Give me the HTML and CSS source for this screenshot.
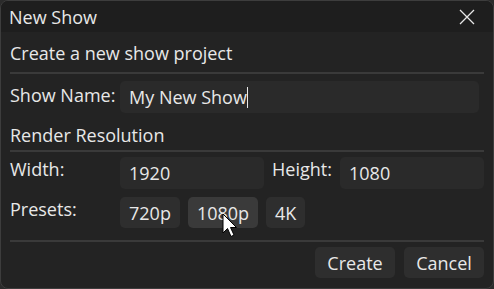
FILE: index.html
```html
<!DOCTYPE html>
<html lang="en">
<head>
    <meta charset="UTF-8">
    <title>New Show</title>
    <link rel="stylesheet" href="styles.css">
</head>
<body>
    <div class="dialog">
        <div class="titlebar">
            <span class="title">New Show</span>
            <svg class="close" width="16" height="16" viewBox="0 0 16 16">
                <path d="M1 1L15 15M15 1L1 15" stroke="#e6e6e6" stroke-width="1.3" fill="none"/>
            </svg>
        </div>
        <div class="content">
            <div class="heading">Create a new show project</div>
            <hr class="sep">
            <div class="row name-row">
                <label class="label">Show Name:</label>
                <div class="field wide">My New Show<span class="caret"></span></div>
            </div>
            <div class="heading sub">Render Resolution</div>
            <hr class="sep tight">
            <div class="row res-row">
                <label class="label">Width:</label>
                <div class="field w-field">1920</div>
                <label class="label inline">Height:</label>
                <div class="field h-field">1080</div>
            </div>
            <div class="row preset-row">
                <label class="label">Presets:</label>
                <div class="presets">
                    <button class="btn">720p</button>
                    <button class="btn hover">1080p</button>
                    <button class="btn">4K</button>
                </div>
            </div>
            <hr class="sep foot">
            <div class="actions">
                <button class="btn action">Create</button>
                <button class="btn action">Cancel</button>
            </div>
        </div>
        <svg class="pointer" width="16" height="26" viewBox="0 0 16 26">
            <path d="M1 1L1 20L5.5 15.5L9 23.5L12 22L8.5 14.5L14.5 14.5Z" fill="#ffffff" stroke="#000000" stroke-width="1"/>
        </svg>
    </div>
</body>
</html>
```

FILE: styles.css
```css
html, body {
    margin: 0;
    padding: 0;
    background: #2b2b2b;
}
body {
    font-family: 'Open Sans', 'Liberation Sans', sans-serif;
    font-size: 18px;
    color: #e8e8e8;
}
.dialog {
    position: relative;
    width: 492px;
    height: 287px;
    background: #232323;
    border: 1px solid #3d3d3d;
    border-radius: 8px;
    overflow: hidden;
}
.titlebar {
    height: 31px;
    background: #1e1e1e;
    display: flex;
    align-items: center;
    justify-content: space-between;
    padding: 0 18px 0 8px;
}
.title {
    line-height: 24px;
}
.close {
    display: block;
}
.content {
    padding: 9px 9px 0 9px;
}
.heading {
    line-height: 24px;
    height: 24px;
}
.heading.sub {
    margin-top: 10px;
}
.sep {
    border: none;
    border-top: 2px solid #3a3a3a;
    margin: 7px 0 0 0;
}
.sep.tight {
    margin-top: 3px;
}
.sep.foot {
    margin-top: 12px;
}
.row {
    display: flex;
    align-items: flex-start;
}
.label {
    width: 110px;
    flex: none;
    line-height: 24px;
}
.label.inline {
    width: auto;
    flex: 1;
    margin-left: 8px;
}
.field {
    background: #2a2a2a;
    border-radius: 5px;
    height: 32px;
    line-height: 32px;
    padding: 0 9px;
    box-sizing: border-box;
}
.name-row {
    margin-top: 7px;
}
.name-row .label {
    margin-top: 2px;
}
.wide {
    width: 359px;
}
.caret {
    display: inline-block;
    width: 1px;
    height: 21px;
    background: #e8e8e8;
    vertical-align: -4px;
}
.res-row {
    margin-top: 5px;
}
.w-field {
    width: 144px;
}
.h-field {
    width: 144px;
}
.preset-row {
    margin-top: 8px;
}
.presets {
    display: flex;
    gap: 8px;
}
.btn {
    font-family: inherit;
    font-size: 18px;
    color: #e8e8e8;
    background: #2e2e2e;
    border: none;
    border-radius: 5px;
    height: 31px;
    padding: 0 9px;
}
.btn.hover {
    background: #3a3a3a;
}
.actions {
    display: flex;
    justify-content: flex-end;
    gap: 9px;
    margin-top: 5px;
}
.action {
    width: 80px;
    height: 31px;
}
.pointer {
    position: absolute;
    left: 221px;
    top: 212px;
}
```
